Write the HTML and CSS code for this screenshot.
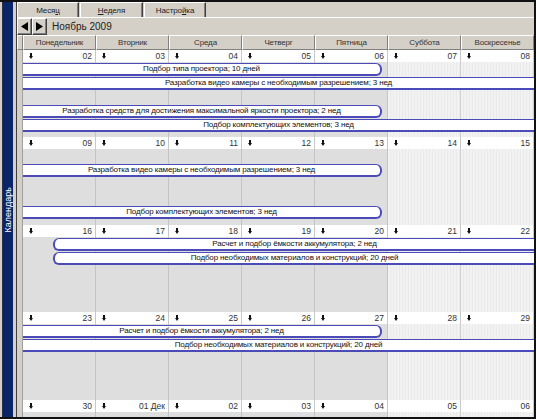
FILE: index.html
```html
<!DOCTYPE html>
<html lang="ru">
<head>
<meta charset="utf-8">
<title>Календарь</title>
<link rel="stylesheet" href="styles.css">
</head>
<body>
<div class="app">
  <div class="sidebar"><span class="side-title">Календарь</span></div>
  <div class="main">
    <div class="tabs">
      <div class="tab t1">Меся<u>ц</u></div>
      <div class="tab t2"><u>Н</u>еделя</div>
      <div class="tab t3">Настро<u>й</u>ка</div>
    </div>
    <div class="nav">
      <div class="navbtn"><svg width="7" height="9" viewBox="0 0 7 9"><polygon points="7,0 7,9 0,4.5" fill="#000"/></svg></div>
      <div class="navbtn"><svg width="7" height="9" viewBox="0 0 7 9"><polygon points="0,0 0,9 7,4.5" fill="#000"/></svg></div>
      <span class="month">Ноябрь 2009</span>
    </div>
    <div class="head">
      <div class="hcell corner"></div>
      <div class="hcell">Понедельник</div>
      <div class="hcell">Вторник</div>
      <div class="hcell">Среда</div>
      <div class="hcell">Четверг</div>
      <div class="hcell">Пятница</div>
      <div class="hcell">Суббота</div>
      <div class="hcell">Воскресенье</div>
    </div>
    <div class="weeks">
      <!-- week 1 -->
      <div class="week">
        <div class="gutter"></div>
        <div class="date"><svg class="arr" viewBox="0 0 4 6"><polygon points="1,0 3,0 3,3 4,3 2,6 0,3 1,3"/></svg><span>02</span></div>
        <div class="date"><svg class="arr" viewBox="0 0 4 6"><polygon points="1,0 3,0 3,3 4,3 2,6 0,3 1,3"/></svg><span>03</span></div>
        <div class="date"><svg class="arr" viewBox="0 0 4 6"><polygon points="1,0 3,0 3,3 4,3 2,6 0,3 1,3"/></svg><span>04</span></div>
        <div class="date"><svg class="arr" viewBox="0 0 4 6"><polygon points="1,0 3,0 3,3 4,3 2,6 0,3 1,3"/></svg><span>05</span></div>
        <div class="date"><svg class="arr" viewBox="0 0 4 6"><polygon points="1,0 3,0 3,3 4,3 2,6 0,3 1,3"/></svg><span>06</span></div>
        <div class="date"><svg class="arr" viewBox="0 0 4 6"><polygon points="1,0 3,0 3,3 4,3 2,6 0,3 1,3"/></svg><span>07</span></div>
        <div class="date"><svg class="arr" viewBox="0 0 4 6"><polygon points="1,0 3,0 3,3 4,3 2,6 0,3 1,3"/></svg><span>08</span></div>
        <div class="day c2"></div><div class="day c3"></div><div class="day c4"></div><div class="day c5"></div><div class="day c6"></div>
        <div class="day wk c7"></div><div class="day wk c8"></div>
        <div class="bar r2 to-fri end">Подбор типа проектора; 10 дней</div>
        <div class="bar r3 to-sun">Разработка видео камеры с необходимым разрешением; 3 нед</div>
        <div class="bar r5 to-fri end">Разработка средств для достижения максимальной яркости проектора; 2 нед</div>
        <div class="bar r6 to-sun">Подбор комплектующих элементов; 3 нед</div>
      </div>
      <!-- week 2 -->
      <div class="week">
        <div class="gutter"></div>
        <div class="date"><svg class="arr" viewBox="0 0 4 6"><polygon points="1,0 3,0 3,3 4,3 2,6 0,3 1,3"/></svg><span>09</span></div>
        <div class="date"><svg class="arr" viewBox="0 0 4 6"><polygon points="1,0 3,0 3,3 4,3 2,6 0,3 1,3"/></svg><span>10</span></div>
        <div class="date"><svg class="arr" viewBox="0 0 4 6"><polygon points="1,0 3,0 3,3 4,3 2,6 0,3 1,3"/></svg><span>11</span></div>
        <div class="date"><svg class="arr" viewBox="0 0 4 6"><polygon points="1,0 3,0 3,3 4,3 2,6 0,3 1,3"/></svg><span>12</span></div>
        <div class="date"><svg class="arr" viewBox="0 0 4 6"><polygon points="1,0 3,0 3,3 4,3 2,6 0,3 1,3"/></svg><span>13</span></div>
        <div class="date"><svg class="arr" viewBox="0 0 4 6"><polygon points="1,0 3,0 3,3 4,3 2,6 0,3 1,3"/></svg><span>14</span></div>
        <div class="date"><svg class="arr" viewBox="0 0 4 6"><polygon points="1,0 3,0 3,3 4,3 2,6 0,3 1,3"/></svg><span>15</span></div>
        <div class="day c2"></div><div class="day c3"></div><div class="day c4"></div><div class="day c5"></div><div class="day c6"></div>
        <div class="day wk c7"></div><div class="day wk c8"></div>
        <div class="bar r3 to-fri end">Разработка видео камеры с необходимым разрешением; 3 нед</div>
        <div class="bar r6 to-fri end">Подбор комплектующих элементов; 3 нед</div>
      </div>
      <!-- week 3 -->
      <div class="week">
        <div class="gutter"></div>
        <div class="date"><svg class="arr" viewBox="0 0 4 6"><polygon points="1,0 3,0 3,3 4,3 2,6 0,3 1,3"/></svg><span>16</span></div>
        <div class="date"><svg class="arr" viewBox="0 0 4 6"><polygon points="1,0 3,0 3,3 4,3 2,6 0,3 1,3"/></svg><span>17</span></div>
        <div class="date"><svg class="arr" viewBox="0 0 4 6"><polygon points="1,0 3,0 3,3 4,3 2,6 0,3 1,3"/></svg><span>18</span></div>
        <div class="date"><svg class="arr" viewBox="0 0 4 6"><polygon points="1,0 3,0 3,3 4,3 2,6 0,3 1,3"/></svg><span>19</span></div>
        <div class="date"><svg class="arr" viewBox="0 0 4 6"><polygon points="1,0 3,0 3,3 4,3 2,6 0,3 1,3"/></svg><span>20</span></div>
        <div class="date"><svg class="arr" viewBox="0 0 4 6"><polygon points="1,0 3,0 3,3 4,3 2,6 0,3 1,3"/></svg><span>21</span></div>
        <div class="date"><svg class="arr" viewBox="0 0 4 6"><polygon points="1,0 3,0 3,3 4,3 2,6 0,3 1,3"/></svg><span>22</span></div>
        <div class="day c2"></div><div class="day c3"></div><div class="day c4"></div><div class="day c5"></div><div class="day c6"></div>
        <div class="day wk c7"></div><div class="day wk c8"></div>
        <div class="bar r2 to-sun start">Расчет и подбор ёмкости аккумулятора; 2 нед</div>
        <div class="bar r3 to-sun start">Подбор необходимых материалов и конструкций; 20 дней</div>
      </div>
      <!-- week 4 -->
      <div class="week">
        <div class="gutter"></div>
        <div class="date"><svg class="arr" viewBox="0 0 4 6"><polygon points="1,0 3,0 3,3 4,3 2,6 0,3 1,3"/></svg><span>23</span></div>
        <div class="date"><svg class="arr" viewBox="0 0 4 6"><polygon points="1,0 3,0 3,3 4,3 2,6 0,3 1,3"/></svg><span>24</span></div>
        <div class="date"><svg class="arr" viewBox="0 0 4 6"><polygon points="1,0 3,0 3,3 4,3 2,6 0,3 1,3"/></svg><span>25</span></div>
        <div class="date"><svg class="arr" viewBox="0 0 4 6"><polygon points="1,0 3,0 3,3 4,3 2,6 0,3 1,3"/></svg><span>26</span></div>
        <div class="date"><svg class="arr" viewBox="0 0 4 6"><polygon points="1,0 3,0 3,3 4,3 2,6 0,3 1,3"/></svg><span>27</span></div>
        <div class="date"><svg class="arr" viewBox="0 0 4 6"><polygon points="1,0 3,0 3,3 4,3 2,6 0,3 1,3"/></svg><span>28</span></div>
        <div class="date"><svg class="arr" viewBox="0 0 4 6"><polygon points="1,0 3,0 3,3 4,3 2,6 0,3 1,3"/></svg><span>29</span></div>
        <div class="day c2"></div><div class="day c3"></div><div class="day c4"></div><div class="day c5"></div><div class="day c6"></div>
        <div class="day wk c7"></div><div class="day wk c8"></div>
        <div class="bar r2 to-fri end">Расчет и подбор ёмкости аккумулятора; 2 нед</div>
        <div class="bar r3 to-sun">Подбор необходимых материалов и конструкций; 20 дней</div>
      </div>
      <!-- week 5 -->
      <div class="week">
        <div class="gutter"></div>
        <div class="date"><svg class="arr" viewBox="0 0 4 6"><polygon points="1,0 3,0 3,3 4,3 2,6 0,3 1,3"/></svg><span>30</span></div>
        <div class="date"><svg class="arr" viewBox="0 0 4 6"><polygon points="1,0 3,0 3,3 4,3 2,6 0,3 1,3"/></svg><span>01 Дек</span></div>
        <div class="date"><svg class="arr" viewBox="0 0 4 6"><polygon points="1,0 3,0 3,3 4,3 2,6 0,3 1,3"/></svg><span>02</span></div>
        <div class="date"><svg class="arr" viewBox="0 0 4 6"><polygon points="1,0 3,0 3,3 4,3 2,6 0,3 1,3"/></svg><span>03</span></div>
        <div class="date"><svg class="arr" viewBox="0 0 4 6"><polygon points="1,0 3,0 3,3 4,3 2,6 0,3 1,3"/></svg><span>04</span></div>
        <div class="date noarr"><span>05</span></div>
        <div class="date noarr"><span>06</span></div>
        <div class="day c2"></div><div class="day c3"></div><div class="day c4"></div><div class="day c5"></div><div class="day c6"></div>
        <div class="day wk c7"></div><div class="day wk c8"></div>
      </div>
    </div>
  </div>
</div>
</body>
</html>
```
FILE: styles.css
```css
* { box-sizing: border-box; }
html, body { margin: 0; padding: 0; }
body {
  width: 536px;
  height: 419px;
  overflow: hidden;
  background: #d4d0c8;
  font-family: "Liberation Sans", Arial, sans-serif;
  font-size: 8px;
  color: #222;
}
.app {
  display: flex;
  width: 536px;
  height: 419px;
  border-top: 2px solid #111;
  border-right: 2px solid #111;
  border-bottom: 2px solid #111;
  padding-left: 2px;
  background: #d4d0c8;
}
.sidebar {
  width: 11px;
  flex: none;
  background: #0a246a;
  border-left: 1px solid #30304a;
  display: flex;
  align-items: center;
  justify-content: center;
}
.side-title {
  writing-mode: vertical-rl;
  transform: rotate(180deg);
  color: #fff;
  font-size: 9px;
  line-height: 10px;
  white-space: nowrap;
}
.main {
  flex: 1;
  margin-left: 3px;
  border-left: 1px solid #404040;
  display: flex;
  flex-direction: column;
  min-width: 0;
}
/* tabs */
.tabs {
  height: 16px;
  display: flex;
  border-bottom: 1px solid #fff;
  gap: 1px;
}
.tab {
  height: 15px;
  border-top: 1px solid #fff;
  border-left: 1px solid #fff;
  border-right: 1px solid #404040;
  box-shadow: inset -1px 0 0 #808080;
  display: flex;
  align-items: center;
  justify-content: center;
  font-size: 8px;
  letter-spacing: -0.1px;
  color: #222;
}
.tab u { text-decoration: underline; }
.t1 { width: 62px; }
.t2 { width: 63px; }
.t3 { width: 62px; }
/* nav */
.nav {
  height: 17px;
  display: flex;
  align-items: center;
}
.navbtn {
  width: 15px;
  height: 17px;
  border-top: 1px solid #fff;
  border-left: 1px solid #fff;
  border-right: 1px solid #404040;
  border-bottom: 1px solid #404040;
  box-shadow: inset -1px -1px 0 #808080;
  display: flex;
  align-items: center;
  justify-content: center;
}
.navbtn svg { display: block; }
.month {
  margin-left: 5px;
  font-size: 10px;
  color: #222;
}
/* header */
.head {
  height: 15px;
  display: grid;
  grid-template-columns: 6px repeat(7, 73px);
}
.hcell {
  border-top: 1px solid #fff;
  border-left: 1px solid #fff;
  border-right: 1px solid #808080;
  border-bottom: 1px solid #808080;
  display: flex;
  align-items: center;
  justify-content: center;
  font-size: 8px;
  letter-spacing: -0.15px;
  color: #333;
  white-space: nowrap;
}
/* weeks */
.weeks {
  flex: 1;
  display: grid;
  grid-template-rows: 87px 88px 87px 88px 1fr;
  overflow: hidden;
}
.week {
  display: grid;
  grid-template-columns: 6px repeat(7, 73px);
  grid-template-rows: 12px repeat(5, 14px) 1fr;
  min-height: 0;
  overflow: hidden;
}
.gutter {
  grid-column: 1;
  grid-row: 1 / -1;
  background: #d4d0c8;
  border-right: 1px solid #a0a0a0;
}
.date {
  grid-row: 1;
  background: #fff;
  border-right: 1px solid #c8c8c8;
  display: flex;
  align-items: center;
  justify-content: space-between;
  padding: 0 3px 0 6px;
  font-size: 8.5px;
  color: #333;
}
.date.noarr { justify-content: flex-end; }
.arr { width: 4px; height: 6px; display: block; fill: #111; }
.day {
  grid-row: 2 / -1;
  background: #dedede;
  border-right: 1px solid #c4c4c4;
}
.c2 { grid-column: 2; }
.c3 { grid-column: 3; }
.c4 { grid-column: 4; }
.c5 { grid-column: 5; }
.c6 { grid-column: 6; }
.c7 { grid-column: 7; }
.c8 { grid-column: 8; }
.day.wk {
  background: repeating-linear-gradient(90deg, #f2f2f2 0 2px, #eaeaea 2px 3px);
  border-right: 1px solid #d0d0d0;
}
.bar {
  height: 13px;
  margin-top: 1px;
  background: #fff;
  border-top: 1px solid #4a4ab8;
  border-bottom: 2px solid #4a4ab8;
  font-size: 8px;
  letter-spacing: -0.15px;
  line-height: 10px;
  text-align: center;
  white-space: nowrap;
  overflow: hidden;
  color: #111;
}
.r2 { grid-row: 2; }
.r3 { grid-row: 3; }
.r4 { grid-row: 4; }
.r5 { grid-row: 5; }
.r6 { grid-row: 6; }
.to-fri { grid-column: 2 / 7; }
.to-sun { grid-column: 2 / 9; }
.bar.end {
  margin-right: 6px;
  border-right: 2px solid #4a4ab8;
  border-radius: 0 6px 6px 0;
}
.bar.start {
  margin-left: 30px;
  border-left: 2px solid #4a4ab8;
  border-radius: 6px 0 0 6px;
}
```
